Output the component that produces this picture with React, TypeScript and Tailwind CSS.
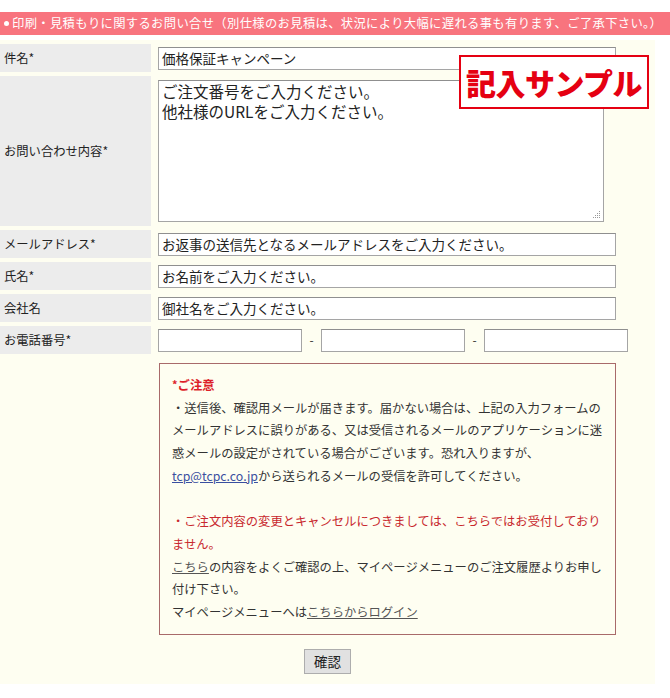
import React from "react";

const font = { fontFamily: '"Noto Sans CJK JP", "Noto Sans", sans-serif' };

function Label({ children, tall }: { children: React.ReactNode; tall?: boolean }) {
  return (
    <div
      className={`w-[151px] shrink-0 bg-[#ececec] flex items-center pl-[4px] text-[12.3px] text-[#222] ${
        tall ? "h-[150px]" : "h-[28px]"
      }`}
    >
      {children}
    </div>
  );
}

function TextInput({ value, w }: { value: string; w: string }) {
  return (
    <div
      className={`${w} h-[23px] bg-white border border-[#a5a5a5] border-t-[#8f8f8f] flex items-center pl-[3px] text-[13.5px] text-[#222] whitespace-nowrap overflow-hidden`}
    >
      {value}
    </div>
  );
}

export default function App() {
  return (
    <div className="w-[670px] h-[698px] bg-white relative" style={font}>
      <div className="pt-[12px]">
        <div className="h-[23px] bg-[#f8747e] text-white text-[12.3px] tracking-[0.35px] flex items-center pl-[4px] whitespace-nowrap">
          <span className="inline-block w-[5px] h-[5px] rounded-full bg-white mr-[3px]" />
          印刷・見積もりに関するお問い合せ（別仕様のお見積は、状況により大幅に遅れる事も有ります、ご了承下さい。）
        </div>

        <div className="w-[655px] bg-[#fefef1] mt-[5px] pt-[4px] pb-[10px]">
          <div className="flex flex-col gap-[4px]">
            <div className="flex gap-[4px] items-center">
              <Label>件名*</Label>
              <div className="pl-[3px]">
                <TextInput w="w-[458px]" value="価格保証キャンペーン" />
              </div>
            </div>

            <div className="flex gap-[4px] items-center">
              <Label tall>お問い合わせ内容*</Label>
              <div className="pl-[3px]">
                <div className="relative w-[446px] h-[142px] bg-white border border-[#a5a5a5] border-t-[#8f8f8f] pl-[3px] text-[15.5px] leading-[20px] text-[#222]">
                  <div>ご注文番号をご入力ください。</div>
                  <div>他社様のURLをご入力ください。</div>
                  <svg className="absolute right-[2px] bottom-[2px]" width="8" height="8" viewBox="0 0 8 8">
                    <rect x="6" y="0" width="1" height="1" fill="#999" />
                    <rect x="4" y="2" width="1" height="1" fill="#999" />
                    <rect x="6" y="2" width="1" height="1" fill="#999" />
                    <rect x="2" y="4" width="1" height="1" fill="#999" />
                    <rect x="4" y="4" width="1" height="1" fill="#999" />
                    <rect x="6" y="4" width="1" height="1" fill="#999" />
                    <rect x="0" y="6" width="1" height="1" fill="#999" />
                    <rect x="2" y="6" width="1" height="1" fill="#999" />
                    <rect x="4" y="6" width="1" height="1" fill="#999" />
                    <rect x="6" y="6" width="1" height="1" fill="#999" />
                  </svg>
                </div>
              </div>
            </div>

            <div className="flex gap-[4px] items-center">
              <Label>メールアドレス*</Label>
              <div className="pl-[3px]">
                <TextInput w="w-[458px]" value="お返事の送信先となるメールアドレスをご入力ください。" />
              </div>
            </div>

            <div className="flex gap-[4px] items-center">
              <Label>氏名*</Label>
              <div className="pl-[3px]">
                <TextInput w="w-[458px]" value="お名前をご入力ください。" />
              </div>
            </div>

            <div className="flex gap-[4px] items-center">
              <Label>会社名</Label>
              <div className="pl-[3px]">
                <TextInput w="w-[458px]" value="御社名をご入力ください。" />
              </div>
            </div>

            <div className="flex gap-[4px] items-center">
              <Label>お電話番号*</Label>
              <div className="pl-[3px] flex items-center">
                <TextInput w="w-[144px]" value="" />
                <span className="w-[19px] text-center text-[12px] text-[#333]">-</span>
                <TextInput w="w-[144px]" value="" />
                <span className="w-[19px] text-center text-[12px] text-[#333]">-</span>
                <TextInput w="w-[144px]" value="" />
              </div>
            </div>
          </div>

          <div className="pl-[159px] mt-[9px]">
            <div className="w-[457px] border border-[#a86a6a] pl-[12px] pt-[9px] pb-[10px] text-[12.3px] leading-[22.7px] text-[#333] whitespace-nowrap">
              <div className="text-[#dd1f2a] font-bold">
                <span className="text-[11px] align-[1px]">*</span>ご注意
              </div>
              <div>
                ・送信後、確認用メールが届きます。届かない場合は、上記の入力フォームの
                <br />
                メールアドレスに誤りがある、又は受信されるメールのアプリケーションに迷
                <br />
                惑メールの設定がされている場合がございます。恐れ入りますが、
                <br />
                <span className="text-[#3a4fa0] underline">tcp@tcpc.co.jp</span>
                から送られるメールの受信を許可してください。
              </div>
              <div className="h-[22.7px]" />
              <div className="text-[#c8282e]">
                ・ご注文内容の変更とキャンセルにつきましては、こちらではお受付しており
                <br />
                ません。
              </div>
              <div>
                <span className="underline text-[#555]">こちら</span>
                の内容をよくご確認の上、マイページメニューのご注文履歴よりお申し
                <br />
                付け下さい。
                <br />
                マイページメニューへは
                <span className="underline text-[#555]">こちらからログイン</span>
              </div>
            </div>
          </div>

          <div className="flex justify-center mt-[14px]">
            <div className="w-[47px] h-[25px] bg-[#e1e1e1] border border-[#adadad] flex items-center justify-center text-[13.5px] text-[#222]">
              確認
            </div>
          </div>
        </div>
      </div>

      <div className="absolute left-[459px] top-[55px] w-[190px] h-[54px] bg-white border-2 border-[#e50012] flex items-center justify-center">
        <span className="text-[30px] font-black text-[#e50012] leading-none tracking-[-0.5px]">記入サンプル</span>
      </div>
    </div>
  );
}
